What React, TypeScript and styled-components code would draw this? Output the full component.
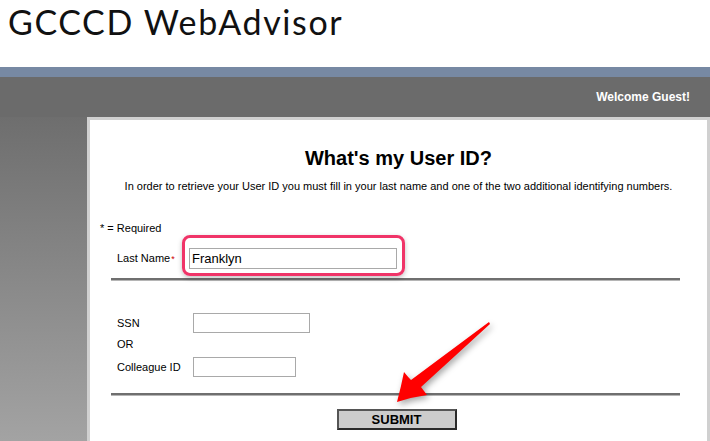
import React from "react";
import styled, { createGlobalStyle } from "styled-components";

const GlobalStyle = createGlobalStyle`
  html, body {
    margin: 0;
    padding: 0;
    background: #ffffff;
    overflow: hidden;
  }
  * {
    box-sizing: border-box;
  }
`;

const Page = styled.div`
  position: relative;
  width: 710px;
  height: 441px;
  display: flex;
  flex-direction: column;
  font-family: "Liberation Sans", Arial, sans-serif;
  color: #000;
`;

const SiteHeader = styled.header`
  height: 67px;
  padding: 2px 0 0 8px;
`;

const SiteTitle = styled.h1`
  margin: 0;
  font-family: Lato, "Open Sans", sans-serif;
  font-weight: 400;
  font-size: 34px;
  letter-spacing: 1.6px;
  line-height: 40px;
  color: #111;
`;

const AccentBar = styled.div`
  height: 10px;
  background: #7789a3;
`;

const WelcomeStrip = styled.div`
  height: 40px;
  background: #6b6b6b;
  display: flex;
  align-items: center;
  justify-content: flex-end;
  padding-right: 20px;
  color: #fff;
  font-weight: 700;
  font-size: 12px;
`;

const Body = styled.div`
  flex: 1;
  display: flex;
  padding-left: 87px;
  background: linear-gradient(#6e6e6e, #a3a3a3);
`;

const Panel = styled.main`
  flex: 1;
  background: #fff;
  border: 3px solid #d0d0d0;
  border-bottom: none;
  display: flex;
  flex-direction: column;
`;

const Heading = styled.h2`
  margin: 26px 0 0;
  text-align: center;
  font-size: 20px;
  line-height: 24px;
  font-weight: 700;
`;

const Intro = styled.p`
  margin: 9px 0 0;
  text-align: center;
  font-size: 11px;
  line-height: 14px;
`;

const RequiredNote = styled.div`
  margin: 28px 0 0 10px;
  font-size: 11px;
  line-height: 14px;
`;

const FieldRow = styled.div<{ $labelWidth: number; $top: number }>`
  display: grid;
  grid-template-columns: ${(p) => p.$labelWidth}px auto;
  justify-content: start;
  justify-items: start;
  align-items: center;
  margin: ${(p) => p.$top}px 0 0 27px;
  font-size: 11px;
`;

const Label = styled.label`
  font-size: 11px;
  line-height: 14px;
`;

const Star = styled.span`
  color: #c00;
  font-size: 9px;
  margin-left: 1px;
`;

const InputWrap = styled.span`
  position: relative;
  display: inline-block;
`;

const Highlight = styled.span`
  position: absolute;
  left: -7px;
  top: -13px;
  right: -8px;
  bottom: -7px;
  border: 3px solid #f03468;
  border-radius: 8px;
  box-shadow: 0 2px 5px rgba(0, 0, 0, 0.25);
  pointer-events: none;
`;

const TextInput = styled.input<{ $width: number; $height: number; $size?: number }>`
  display: block;
  width: ${(p) => p.$width}px;
  height: ${(p) => p.$height}px;
  border: 1px solid #a9a9a9;
  padding: 0 2px;
  font-family: "Liberation Sans", Arial, sans-serif;
  font-size: ${(p) => p.$size ?? 13}px;
  color: #000;
  background: #fff;
  outline: none;
`;

const Rule = styled.hr<{ $top: number }>`
  margin: ${(p) => p.$top}px 0 0 21px;
  width: 569px;
  height: 3px;
  border: none;
  background: #6f6f6f;
  border-bottom: 1px solid #b5b5b5;
`;

const OrText = styled.div`
  margin: 3px 0 0 27px;
  font-size: 11px;
  line-height: 16px;
`;

const SubmitRow = styled.div`
  margin-top: 13px;
  display: flex;
  justify-content: center;
  padding-right: 4px;
`;

const SubmitButton = styled.button`
  width: 120px;
  height: 21px;
  padding: 0;
  background: #cccccc;
  border: 2px solid #2a2a2a;
  border-top-color: #555;
  border-left-color: #555;
  font-family: "Liberation Sans", Arial, sans-serif;
  font-weight: 700;
  font-size: 13px;
  color: #000;
  line-height: 17px;
`;

const ArrowLayer = styled.svg`
  position: absolute;
  left: 0;
  top: 0;
  pointer-events: none;
  filter: drop-shadow(2px 3px 3px rgba(0, 0, 0, 0.35));
`;

export default function App() {
  return (
    <>
      <GlobalStyle />
      <Page>
        <SiteHeader>
          <SiteTitle>GCCCD WebAdvisor</SiteTitle>
        </SiteHeader>
        <AccentBar />
        <WelcomeStrip>Welcome Guest!</WelcomeStrip>
        <Body>
          <Panel>
            <Heading>What's my User ID?</Heading>
            <Intro>
              In order to retrieve your User ID you must fill in your last name and one of the two additional identifying numbers.
            </Intro>
            <RequiredNote>* = Required</RequiredNote>
            <FieldRow $labelWidth={72} $top={13}>
              <Label>
                Last Name<Star>*</Star>
              </Label>
              <InputWrap>
                <TextInput $width={208} $height={21} defaultValue="Franklyn" />
                <Highlight />
              </InputWrap>
            </FieldRow>
            <Rule $top={9} />
            <FieldRow $labelWidth={76} $top={32}>
              <Label>SSN</Label>
              <TextInput $width={117} $height={20} />
            </FieldRow>
            <OrText>OR</OrText>
            <FieldRow $labelWidth={76} $top={5}>
              <Label>Colleague ID</Label>
              <TextInput $width={103} $height={20} />
            </FieldRow>
            <Rule $top={16} />
            <SubmitRow>
              <SubmitButton type="button">SUBMIT</SubmitButton>
            </SubmitRow>
          </Panel>
        </Body>
        <ArrowLayer width="710" height="441" viewBox="0 0 710 441">
          <path
            d="M489 322 L490 324 L421 387 Q424 391 427 395 Q412 397 397 402 Q401 387 404 372 Q408 377 411 380 Z"
            fill="#ff0000"
          />
        </ArrowLayer>
      </Page>
    </>
  );
}
